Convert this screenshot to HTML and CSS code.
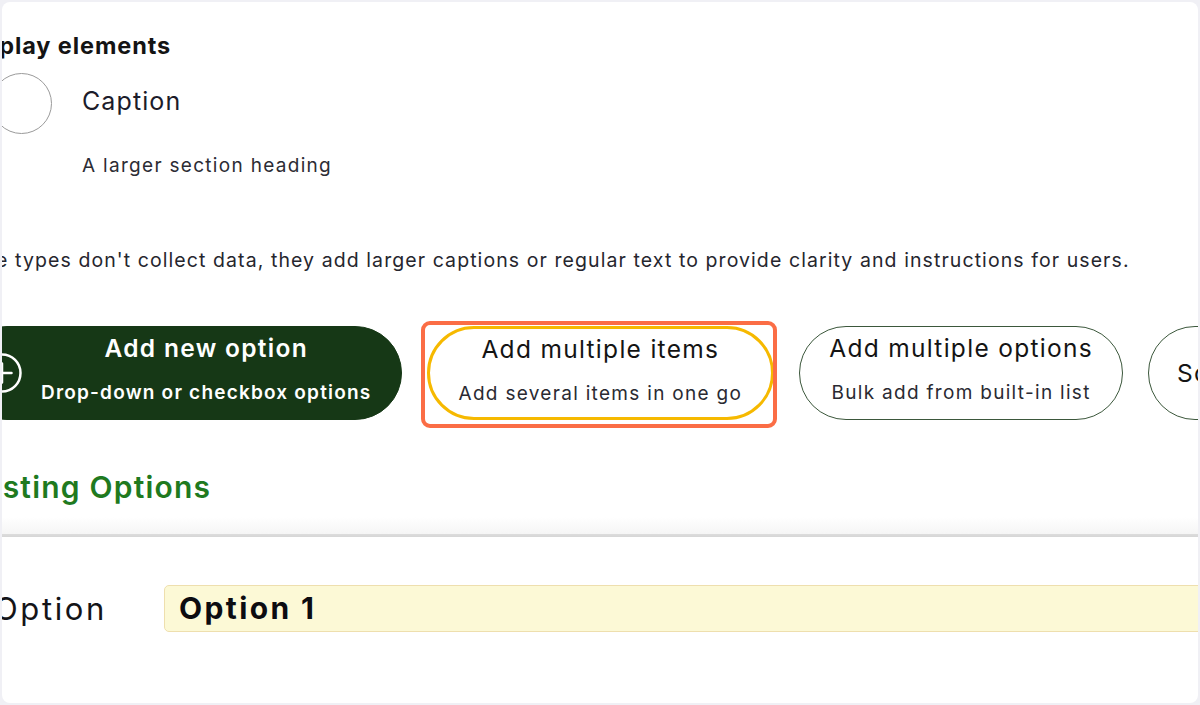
FILE: index.html
```html
<!DOCTYPE html>
<html lang="en">
<head>
<meta charset="utf-8">
<title>Options editor</title>
<link rel="stylesheet" href="styles.css">
</head>
<body>
<div class="card">
  <div class="content">
    <h2 class="section-title">Display elements</h2>
    <div class="radio-row">
      <span class="radio"></span>
      <span class="radio-label">Caption</span>
    </div>
    <p class="radio-desc">A larger section heading</p>
    <p class="intro">These types don't collect data, they add larger captions or regular text to provide clarity and instructions for users.</p>

    <div class="actions">
      <button class="action action-primary">
        <svg class="plus-icon" width="42" height="42" viewBox="0 0 42 42" aria-hidden="true">
          <circle cx="21" cy="21" r="18.5" fill="none" stroke="#ffffff" stroke-width="2.5"/>
          <path d="M21 11.5v19M11.5 21h19" stroke="#ffffff" stroke-width="2.5" stroke-linecap="round"/>
        </svg>
        <span class="action-text">
          <span class="action-title">Add new option</span>
          <span class="action-sub">Drop-down or checkbox options</span>
        </span>
      </button>
      <button class="action action-outline action-focus">
        <span class="action-text">
          <span class="action-title">Add multiple items</span>
          <span class="action-sub">Add several items in one go</span>
        </span>
        <span class="highlight"></span>
      </button>
      <button class="action action-outline">
        <span class="action-text">
          <span class="action-title">Add multiple options</span>
          <span class="action-sub">Bulk add from built-in list</span>
        </span>
      </button>
      <button class="action action-outline action-single">
        <span class="action-title">Sort options</span>
      </button>
    </div>

    <h2 class="existing-title">Existing Options</h2>
  </div>
  <div class="divider"></div>
  <div class="content">
    <div class="option-row">
      <label class="option-label">Option</label>
      <div class="option-input">Option 1</div>
    </div>
  </div>
</div>
</body>
</html>
```

FILE: styles.css
```css
* { box-sizing: border-box; }

html, body {
  margin: 0;
  padding: 0;
  background: #f0f0f5;
  width: 1200px;
  height: 705px;
  overflow: hidden;
}

body {
  font-family: Inter, "Noto Sans", "Liberation Sans", sans-serif;
  color: #1c1c26;
}

.card {
  margin: 2px 2px 0 2px;
  height: 701px;
  background: #ffffff;
  border-radius: 8px;
  overflow: hidden;
}

.content {
  margin-left: -42px;
  display: flex;
  flex-direction: column;
  align-items: flex-start;
}

.section-title {
  margin: 30px 0 0 0;
  font-size: 23.5px;
  line-height: 28px;
  font-weight: 700;
  letter-spacing: 0.9px;
  color: #141414;
  white-space: nowrap;
}

.radio-row {
  margin-top: 13px;
  display: flex;
  align-items: center;
  gap: 30px;
  padding-left: 31px;
}

.radio {
  width: 61px;
  height: 61px;
  border-radius: 50%;
  border: 1.5px solid #9a9a9a;
  background: #fff;
  flex-shrink: 0;
}

.radio-label {
  font-size: 25px;
  line-height: 30px;
  letter-spacing: 1.1px;
  color: #1c1c2a;
  margin-top: -5px;
}

.radio-desc {
  margin: 20px 0 0 122px;
  font-size: 19px;
  line-height: 24px;
  letter-spacing: 1.3px;
  color: #2c2c34;
}

.intro {
  margin: 70px 0 0 -14px;
  font-size: 19.5px;
  line-height: 24px;
  letter-spacing: 1.08px;
  color: #26262e;
  white-space: nowrap;
}

.actions {
  margin-top: 54px;
  display: flex;
  gap: 25px;
  white-space: nowrap;
}

.action {
  position: relative;
  height: 94px;
  border-radius: 47px;
  font-family: inherit;
  display: flex;
  align-items: flex-start;
  flex-shrink: 0;
  cursor: pointer;
  padding: 0;
}

.action-text {
  display: flex;
  flex-direction: column;
  align-items: center;
  gap: 18px;
}

.action-title {
  font-size: 24.5px;
  line-height: 30px;
  letter-spacing: 1.3px;
}

.action-sub {
  font-size: 19px;
  line-height: 24px;
  letter-spacing: 1.3px;
}

.action-primary {
  background: #163816;
  border: 1px solid #163816;
  color: #ffffff;
  padding: 6px 29px 0 20px;
  gap: 18px;
}

.action-primary .plus-icon {
  margin-top: 19px;
  flex-shrink: 0;
}

.action-primary .action-title,
.action-primary .action-sub {
  font-weight: 600;
}

.action-primary .action-sub {
  letter-spacing: 1.2px;
}

.action-outline {
  background: #ffffff;
  border: 1.5px solid #3b573b;
  color: #141414;
  padding: 6px 29px 0 29px;
}

.action-outline .action-sub {
  color: #2a2a32;
}

.action-focus {
  border: 3px solid #f6b900;
  padding-top: 5px;
}

.action-single {
  align-items: center;
  padding: 0 28px;
}

.highlight {
  position: absolute;
  left: -9px;
  right: -6px;
  top: -8px;
  bottom: -11px;
  border: 4px solid #fb6d45;
  border-radius: 9px;
  pointer-events: none;
}

.existing-title {
  margin: 49px 0 0 -4px;
  font-size: 30px;
  line-height: 36px;
  font-weight: 600;
  letter-spacing: 1.2px;
  color: #1f7a1f;
  white-space: nowrap;
}

.divider {
  margin-top: 12px;
  height: 20px;
  background: linear-gradient(to bottom, #ffffff 0%, #f5f5f5 85%, #dcdcdc 85%, #d6d6d6 100%);
}

.option-row {
  margin-top: 48px;
  display: flex;
  align-items: center;
  gap: 0;
}

.option-label {
  width: 204px;
  padding-left: 34px;
  font-size: 31px;
  line-height: 36px;
  letter-spacing: 2.6px;
  color: #141418;
}

.option-input {
  width: 1100px;
  height: 47px;
  background: #fcf9d6;
  border: 1.5px solid #eedfae;
  border-radius: 5px;
  padding-left: 14px;
  font-size: 30px;
  line-height: 44px;
  font-weight: 700;
  letter-spacing: 2.4px;
  color: #0c0c10;
}
```
